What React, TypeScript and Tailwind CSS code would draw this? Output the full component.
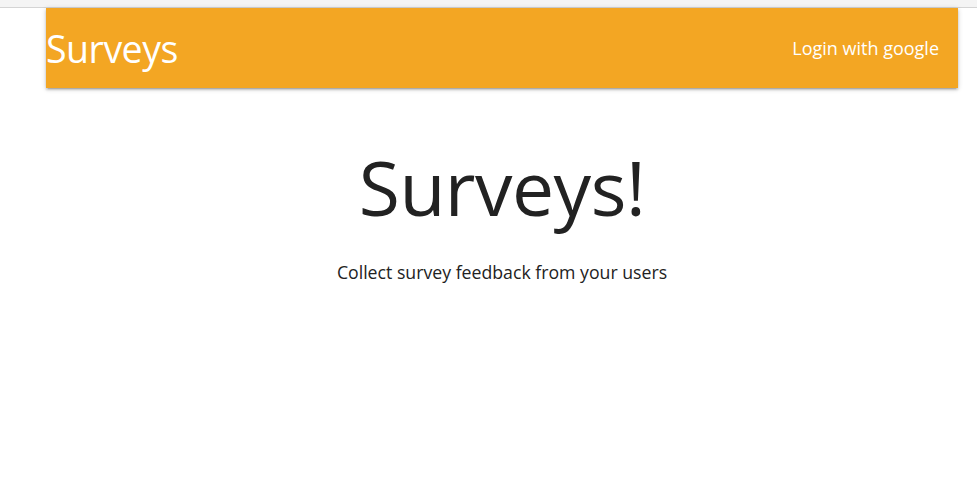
import React from 'react';

const App: React.FC = () => {
  return (
    <div className="min-h-[487px] bg-white" style={{ fontFamily: '"Open Sans", "Noto Sans", sans-serif' }}>
      <div className="h-[8px] bg-[#f4f4f4] border-b border-[#d4d4d4]" />
      <div className="ml-[46px] w-[912px]">
        <nav className="h-[80px] bg-[#f3a623] text-white flex items-center justify-between shadow-[0_2px_2px_0_rgba(0,0,0,0.14),0_3px_1px_-2px_rgba(0,0,0,0.12),0_1px_5px_0_rgba(0,0,0,0.2)]">
          <a className="text-[37.5px] leading-[80px] tracking-[-0.5px] pt-[2px]">Surveys</a>
          <a className="text-[18px] px-[19px] leading-[80px]">Login with google</a>
        </nav>
        <div className="text-center">
          <h1 className="text-[75px] leading-none text-[#222222] mt-[62px] tracking-[-0.5px]">Surveys!</h1>
          <p className="text-[17.7px] text-[#222222] mt-[34px]">Collect survey feedback from your users</p>
        </div>
      </div>
    </div>
  );
};

export default App;
